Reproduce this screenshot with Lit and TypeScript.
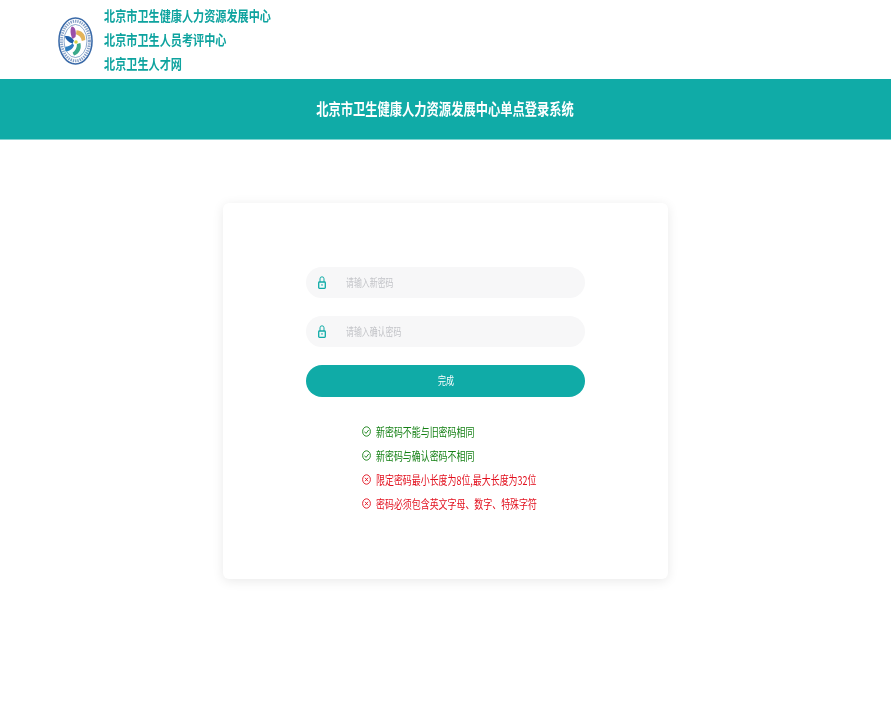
import { LitElement, html, css, svg } from "lit";
import { customElement } from "lit/decorators.js";

const FONT = css`"Noto Sans CJK SC", "Liberation Sans", sans-serif`;

const lock = svg`<svg class="lock" viewBox="0 0 8 13" width="8" height="13" fill="none" stroke="#10aba7">
  <path d="M2 6V2.800a2 2 0 0 1 4 0V6" stroke-width="1"/>
  <rect x=".7" y="6" width="6.600" height="6.300" rx=".8" fill="#f1f9f9" stroke-width="1.300"/>
  <rect x="3.500" y="8" width="1" height="1.800" fill="#10aba7" stroke="none"/>
</svg>`;

const ok = svg`<svg viewBox="0 0 9 11" width="9" height="11" fill="none" stroke="currentColor" stroke-width=".9">
  <ellipse cx="4.500" cy="5.500" rx="3.900" ry="4.700"/><path d="M2.400 5.600 4 7.400 6.700 4"/></svg>`;
const bad = svg`<svg viewBox="0 0 9 11" width="9" height="11" fill="none" stroke="currentColor" stroke-width=".9">
  <ellipse cx="4.500" cy="5.500" rx="3.900" ry="4.700"/><path d="M3 3.800l3 3.400M6 3.800 3 7.200"/></svg>`;

const petal = (d: string, c: string) => svg`<path d=${d} fill=${c}/>`;

const logo = svg`<svg class="logo" viewBox="0 0 36 50" width="35" height="50">
  <ellipse cx="18" cy="25" rx="17" ry="23.600" fill="#fff" stroke="#3a6aa8" stroke-width="1.600"/>
  <ellipse cx="18" cy="25" rx="14.400" ry="20.400" fill="none" stroke="#86a2c8" stroke-width="3" stroke-dasharray="1.400 1"/>
  <ellipse cx="18" cy="25" rx="11.800" ry="17" fill="#fff" stroke="#3a6aa8" stroke-width=".6"/>
  ${petal("M14 10c4 0 5 6 4 11l-3 2c-2-4-3-9-1-13z", "#9a4fa8")}
  ${petal("M19 14c5 0 9.500 4 9 10l-3.500 1c-.5-4-3-6-6-7z", "#e3b45a")}
  ${petal("M23 27c1.500 6-1 11-6.500 13l-1.500-3c3-2 4.500-5 4.500-9z", "#3aa98a")}
  ${petal("M7 20c4-1 7 1 9.500 4.500l-1.500 3c-4-1-7-4-8-7.500z", "#1f5fa8")}
  ${petal("M7.500 31c3 0 5.500-1.500 7.500-4l1.500 2.500c-1.500 4-5 6-9 6z", "#2f7fc0")}
  <circle cx="18.500" cy="26" r="1.800" fill="#d8d040"/>
</svg>`;

@customElement("app-root")
export class AppRoot extends LitElement {
  static styles = css`
    :host {
      display: block;
      width: 891px;
      height: 705px;
      background: #fff;
      overflow: hidden;
      font-family: ${FONT};
    }
    .top {
      height: 79px;
      box-sizing: border-box;
      padding: 3px 0 0 58px;
      display: flex;
      align-items: flex-start;
      gap: 11px;
    }
    .logo { margin-top: 13px; flex: none; filter: blur(0.4px); }
    .names { display: flex; flex-direction: column; }
    .names div {
      height: 24px;
      line-height: 24px;
      font-size: 14px;
      font-weight: 700;
      color: #0ea39f;
      white-space: nowrap;
      transform: scaleX(0.795);
      transform-origin: left center;
    }
    .band {
      height: 61px;
      background: #10aba7;
      display: flex;
      align-items: center;
      justify-content: center;
      border-bottom: 1px solid #7fd4d1;
      box-sizing: border-box;
    }
    .band span {
      color: #fff;
      font-size: 16px;
      font-weight: 700;
      white-space: nowrap;
      transform: scaleX(0.767);
      margin-top: -2px;
    }
    .card {
      width: 445px;
      height: 376px;
      box-sizing: border-box;
      margin: 63px 0 0 223px;
      padding: 63.500px 83px 0;
      background: #fff;
      border-radius: 6px;
      box-shadow: 0 2px 12px rgba(0, 0, 0, 0.09);
    }
    .field {
      height: 31.500px;
      border-radius: 16px;
      background: #f7f7f8;
      display: flex;
      align-items: center;
      padding-left: 12px;
      margin-bottom: 17.500px;
    }
    .field span {
      margin-left: 20px;
      margin-top: -1px;
      font-size: 11px;
      color: #c3c4c8;
      white-space: nowrap;
      transform: scaleX(0.72);
      transform-origin: left center;
    }
    .lock { flex: none; }
    .btn {
      width: 100%;
      height: 32px;
      border: 0;
      padding: 0 0 2px;
      border-radius: 16px;
      background: #10aba7;
      color: #fff;
      font-family: inherit;
      font-size: 11px;
      display: block;
    }
    .btn span { display: inline-block; transform: scaleX(0.727); }
    .hints { margin: 23px 0 0 56px; }
    .hint {
      height: 24px;
      display: flex;
      align-items: center;
      gap: 5px;
      font-size: 12px;
      white-space: nowrap;
    }
    .hint svg { flex: none; }
    .hint span { transform: scaleX(0.745); transform-origin: left center; margin-top: -1px; }
    .good { color: #148014; }
    .err { color: #e2101e; }
  `;

  render() {
    return html`
      <div class="top">
        ${logo}
        <div class="names">
          <div>北京市卫生健康人力资源发展中心</div>
          <div>北京市卫生人员考评中心</div>
          <div>北京卫生人才网</div>
        </div>
      </div>
      <div class="band"><span>北京市卫生健康人力资源发展中心单点登录系统</span></div>
      <div class="card">
        <div class="field">${lock}<span>请输入新密码</span></div>
        <div class="field">${lock}<span>请输入确认密码</span></div>
        <button class="btn"><span>完成</span></button>
        <div class="hints">
          <div class="hint good">${ok}<span>新密码不能与旧密码相同</span></div>
          <div class="hint good">${ok}<span>新密码与确认密码不相同</span></div>
          <div class="hint err">${bad}<span>限定密码最小长度为8位,最大长度为32位</span></div>
          <div class="hint err">${bad}<span>密码必须包含英文字母、数字、特殊字符</span></div>
        </div>
      </div>
    `;
  }
}
